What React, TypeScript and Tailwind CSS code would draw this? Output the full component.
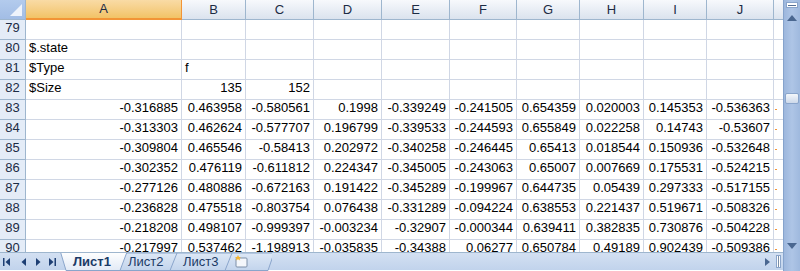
import React from "react";

const cols = ["A", "B", "C", "D", "E", "F", "G", "H", "I", "J"];
const colW = ["w-[156px]", "w-[64px]", "w-[68px]", "w-[68px]", "w-[68px]", "w-[67px]", "w-[63px]", "w-[64px]", "w-[63px]", "w-[67px]"];

const rows: { n: number; cells: string[]; left?: boolean }[] = [
  { n: 79, cells: [] },
  { n: 80, cells: ["$.state"], left: true },
  { n: 81, cells: ["$Type", "f"], left: true },
  { n: 82, cells: ["$Size", "135", "152"] },
  { n: 83, cells: ["-0.316885", "0.463958", "-0.580561", "0.1998", "-0.339249", "-0.241505", "0.654359", "0.020003", "0.145353", "-0.536363"] },
  { n: 84, cells: ["-0.313303", "0.462624", "-0.577707", "0.196799", "-0.339533", "-0.244593", "0.655849", "0.022258", "0.14743", "-0.53607"] },
  { n: 85, cells: ["-0.309804", "0.465546", "-0.58413", "0.202972", "-0.340258", "-0.246445", "0.65413", "0.018544", "0.150936", "-0.532648"] },
  { n: 86, cells: ["-0.302352", "0.476119", "-0.611812", "0.224347", "-0.345005", "-0.243063", "0.65007", "0.007669", "0.175531", "-0.524215"] },
  { n: 87, cells: ["-0.277126", "0.480886", "-0.672163", "0.191422", "-0.345289", "-0.199967", "0.644735", "0.05439", "0.297333", "-0.517155"] },
  { n: 88, cells: ["-0.236828", "0.475518", "-0.803754", "0.076438", "-0.331289", "-0.094224", "0.638553", "0.221437", "0.519671", "-0.508326"] },
  { n: 89, cells: ["-0.218208", "0.498107", "-0.999397", "-0.003234", "-0.32907", "-0.000344", "0.639411", "0.382835", "0.730876", "-0.504228"] },
  { n: 90, cells: ["-0.217997", "0.537462", "-1.198913", "-0.035835", "-0.34388", "0.06277", "0.650784", "0.49189", "0.902439", "-0.509386"] },
];

function Cell({ w, text, left }: { w: string; text?: string; left?: boolean }) {
  // text cells are left-aligned, numbers right-aligned (except "f" in row 81)
  const isNum = text !== undefined && /^-?[0-9.]+$/.test(text);
  return (
    <div
      className={`${w} h-[20px] shrink-0 border-r border-b border-[#d0d7e5] flex items-end pb-[2px] px-[3px] whitespace-nowrap ${
        isNum && !left ? "justify-end" : "justify-start"
      }`}
    >
      {text}
    </div>
  );
}

function Tabs() {
  return (
    <div className="relative w-[212px] h-[18px] shrink-0">
      <svg className="absolute left-0 top-0" width="212" height="18" viewBox="0 0 212 18">
        <defs>
          <linearGradient id="tabIn" x1="0" y1="0" x2="0" y2="1">
            <stop offset="0" stopColor="#dde8f6" />
            <stop offset="1" stopColor="#c2d4ec" />
          </linearGradient>
          <linearGradient id="tabOn" x1="0" y1="0" x2="0" y2="1">
            <stop offset="0" stopColor="#ffffff" />
            <stop offset="1" stopColor="#e2eaf6" />
          </linearGradient>
        </defs>
        <polygon points="156,0 214,0 208,17.5 163,17.5" fill="url(#tabIn)" stroke="#8aa5cb" />
        <polygon points="103,0 172,0 165,17.5 110,17.5" fill="url(#tabIn)" stroke="#8aa5cb" />
        <polygon points="53,0 117,0 110,17.5 60,17.5" fill="url(#tabIn)" stroke="#8aa5cb" />
        <polygon points="0.5,-1 67,-1 60,17.5 6,17.5" fill="url(#tabOn)" stroke="#8aa5cb" />
        {/* insert sheet icon */}
        <rect x="176" y="5" width="11" height="9" rx="1" fill="#f4f7fb" stroke="#7c8fa8" />
        <path d="M178 2 l1 2 2 0 -1.5 1.5 .7 2 -2.2 -1.2 -2.2 1.2 .7 -2 -1.5 -1.5 2 0z" fill="#f5b532" />
      </svg>
      <div className="absolute left-0 top-0 h-[18px] flex items-center text-[13px] text-[#1b3a66]">
        <span className="absolute left-[13px] font-bold">Лист1</span>
        <span className="absolute left-[68px]">Лист2</span>
        <span className="absolute left-[123px]">Лист3</span>
      </div>
    </div>
  );
}

function Nav() {
  return (
    <div className="w-[60px] h-[18px] shrink-0 flex items-center gap-[6px] pl-[3px] text-[#1e3f74]">
      <svg width="8" height="8" viewBox="0 0 8 8">
        <rect x="0" y="0" width="1.5" height="8" fill="currentColor" />
        <polygon points="7,0 7,8 2.5,4" fill="currentColor" />
      </svg>
      <svg width="8" height="8" viewBox="0 0 8 8" className="ml-[3px]">
        <polygon points="6,0 6,8 1.5,4" fill="currentColor" />
      </svg>
      <svg width="8" height="8" viewBox="0 0 8 8">
        <polygon points="2,0 2,8 6.5,4" fill="currentColor" />
      </svg>
      <svg width="8" height="8" viewBox="0 0 8 8">
        <polygon points="1,0 1,8 5.5,4" fill="currentColor" />
        <rect x="6.5" y="0" width="1.5" height="8" fill="currentColor" />
      </svg>
    </div>
  );
}

export default function App() {
  return (
    <div className="w-[800px] h-[271px] flex bg-white overflow-hidden font-['Liberation_Sans',sans-serif] text-[13px] text-black">
      <div className="w-[783px] flex flex-col">
        {/* Grid */}
        <div className="h-[253px] overflow-hidden">
          {/* Column headers */}
          <div className="flex h-[20px]">
            <div className="w-[26px] h-[20px] shrink-0 relative bg-gradient-to-b from-[#b3cbed] to-[#a2bde5] border-r border-b border-[#9eb6ce]">
              <div className="absolute right-[3px] bottom-[3px] w-0 h-0 border-l-[12px] border-l-transparent border-b-[12px] border-b-[#eef3fb]" />
            </div>
            {cols.map((c, i) => (
              <div
                key={c}
                className={`${colW[i]} h-[20px] shrink-0 flex items-center justify-center border-r border-b text-[#1c2b44] ${
                  i === 0
                    ? "bg-gradient-to-b from-[#f9dba5] to-[#f2c365] border-[#f29436] border-b-2"
                    : "bg-gradient-to-b from-[#f7f9fc] to-[#dbe3ee] border-[#9eb6ce]"
                }`}
              >
                {c}
              </div>
            ))}
            <div className="w-[9px] h-[20px] shrink-0 bg-gradient-to-b from-[#f7f9fc] to-[#dbe3ee] border-b border-[#9eb6ce]" />
          </div>
          {/* Rows */}
          {rows.map((r) => (
            <div key={r.n} className="flex h-[20px]">
              <div className="w-[26px] h-[20px] shrink-0 flex items-end pb-[2px] justify-center bg-[#e4ecf7] border-r border-b border-[#9eb6ce] text-[#1c2b44]">
                {r.n}
              </div>
              {cols.map((c, i) => (
                <Cell key={c} w={colW[i]} text={r.cells[i]} left={r.left} />
              ))}
              <div className="w-[9px] h-[20px] shrink-0 border-b border-[#d0d7e5] flex items-center">
                {r.n >= 83 && <div className="ml-[1px] w-[2px] h-[1px] bg-[#f29436]" />}
              </div>
            </div>
          ))}
        </div>
        {/* Sheet tabs bar */}
        <div className="h-[18px] flex bg-gradient-to-b from-[#d3e0f2] to-[#c1d3ec] border-t border-[#9eb6ce] -mt-px">
          <Nav />
          <Tabs />
          <div className="flex-1 flex items-center justify-end gap-[6px] pr-[2px]">
            <svg width="5" height="8" viewBox="0 0 5 8">
              <polygon points="0,0 0,8 5,4" fill="#4a6790" />
            </svg>
            <div className="w-[5px] h-[13px] bg-white border border-[#8aa5cb] flex justify-center">
              <div className="w-px h-full bg-[#7a8ea8]" />
            </div>
          </div>
        </div>
      </div>
      {/* Vertical scrollbar */}
      <div className="w-[17px] h-[271px] relative bg-gradient-to-r from-[#9db7dd] via-[#aec5e6] to-[#9fb9de] border-l border-[#86a3cc]">
        <div className="absolute left-[2px] top-[2px] w-[12px] h-[6px] bg-white border border-[#8aa5cb] flex items-center justify-center">
          <div className="w-[8px] h-px bg-[#556f94]" />
        </div>
        <svg className="absolute left-[3px] top-[15px]" width="10" height="6" viewBox="0 0 10 6">
          <polygon points="0,6 10,6 5,0" fill="#4a6790" />
        </svg>
        <div className="absolute left-[1px] top-[93px] w-[14px] h-[11px] rounded-[2px] bg-gradient-to-b from-[#f4f7fb] to-[#cdd9ea] border border-[#8aa5cb]" />
        <svg className="absolute left-[3px] top-[243px]" width="10" height="6" viewBox="0 0 10 6">
          <polygon points="0,0 10,0 5,6" fill="#4a6790" />
        </svg>
      </div>
    </div>
  );
}
